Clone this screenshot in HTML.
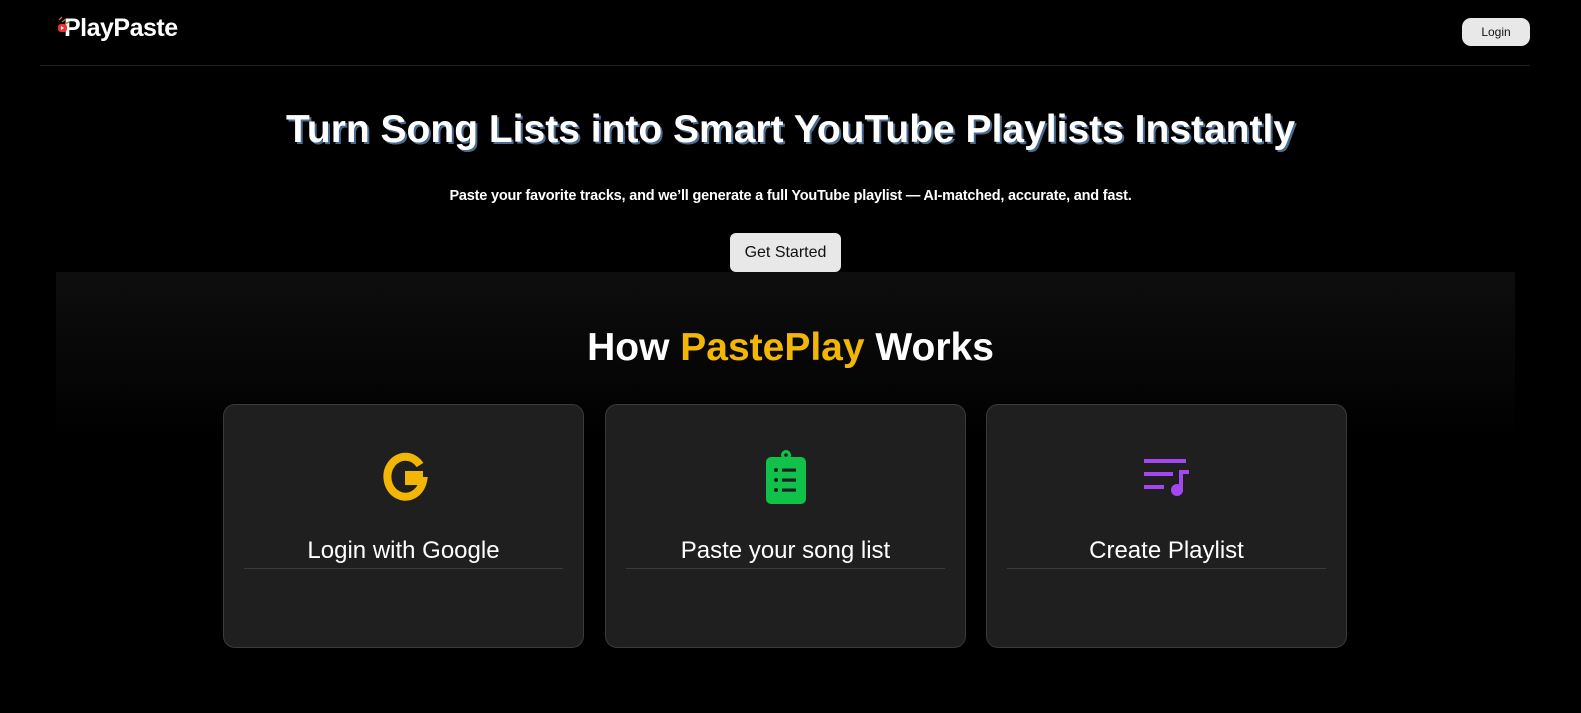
<!DOCTYPE html>
<html><head><meta charset="utf-8">
<style>
*{margin:0;padding:0;box-sizing:border-box}
body{width:1581px;height:713px;background:#000;font-family:"Liberation Sans",sans-serif;color:#fff;position:relative;overflow:hidden}
.abs{position:absolute}
.logo{left:56px;top:14px;font-size:25px;font-weight:bold;letter-spacing:-0.5px}
.hr{left:40px;top:65px;width:1490px;height:1px;background:#1f1f1f}
.login{left:1462px;top:18px;width:68px;height:28px;background:#e8e8e8;border-radius:9px;color:#111;font-size:12px;display:flex;align-items:center;justify-content:center}
h1{position:absolute;left:0;width:1581px;top:108px;text-align:center;font-size:39px;font-weight:bold;text-shadow:2px 2px 0 #4a6a90}
.sub{left:0;width:1581px;top:188px;text-align:center;font-size:14.5px;font-weight:bold;letter-spacing:-0.2px}
.btn{left:730px;top:233px;width:111px;height:39px;background:#e8e8e8;border-radius:6px;color:#111;font-size:16px;display:flex;align-items:center;justify-content:center}
.sec{left:56px;top:272px;width:1459px;height:441px;background:linear-gradient(#0e0e0e,#000 170px)}
h2{position:absolute;left:0;width:1581px;top:326px;text-align:center;font-size:39px;font-weight:bold}
.card{top:404px;width:361px;height:244px;background:#1f1f1f;border:1px solid #3a3a3a;border-radius:12px}
.card .t{position:absolute;left:0;right:0;top:132px;text-align:center;font-size:24px}
.card .l{position:absolute;left:20px;right:20px;top:163px;height:1px;background:#3a3a3a}
.card svg{position:absolute;left:50%;top:44px;transform:translateX(-50%)}
</style></head><body>
<div class="abs logo"><svg width="14" height="22" style="position:absolute;left:0;top:0" viewBox="0 0 14 22"><path d="M3 6l3-3M6 8l4-3M9 10l4-2" stroke="#c86a2a" stroke-width="1.3"/><rect x="2" y="10" width="9" height="8" rx="3" fill="#e33"/><path d="M5 12v4l3-2z" fill="#fff"/></svg><span style="margin-left:8px">PlayPaste</span></div>
<div class="abs hr"></div>
<div class="abs login">Login</div>
<h1>Turn Song Lists into Smart YouTube Playlists Instantly</h1>
<div class="abs sub">Paste your favorite tracks, and we’ll generate a full YouTube playlist — AI-matched, accurate, and fast.</div>
<div class="abs btn">Get Started</div>
<div class="abs sec"></div>
<h2>How <span style="color:#f2b705">PastePlay</span> Works</h2>
<div class="abs card" style="left:223px"><svg width="56" height="56" viewBox="0 0 56 56"><path d="M44 16A18 20 0 1 0 47 32H33v-6h14" fill="none" stroke="#f2b705" stroke-width="8"/></svg><div class="t">Login with Google</div><div class="l"></div></div>
<div class="abs card" style="left:605px"><svg width="44" height="56" viewBox="0 0 44 56"><rect x="2" y="8" width="40" height="47" rx="5" fill="#10c24a"/><circle cx="22" cy="6" r="5" fill="#10c24a"/><circle cx="22" cy="6" r="1.8" fill="#1f1f1f"/><g fill="#1f1f1f"><circle cx="12" cy="21" r="2"/><circle cx="12" cy="31" r="2"/><circle cx="12" cy="41" r="2"/><rect x="18" y="19.5" width="14" height="3.2"/><rect x="18" y="29.5" width="14" height="3.2"/><rect x="18" y="39.5" width="14" height="3.2"/></g></svg><div class="t">Paste your song list</div><div class="l"></div></div>
<div class="abs card" style="left:986px"><svg width="56" height="56" viewBox="0 0 56 56"><g fill="#a347f0"><rect x="5" y="10" width="42" height="4"/><rect x="5" y="23" width="29" height="4"/><rect x="5" y="36" width="20" height="4"/><rect x="40" y="21" width="4" height="21"/><rect x="40" y="21" width="10" height="4"/><circle cx="38" cy="41" r="6"/></g></svg><div class="t">Create Playlist</div><div class="l"></div></div>
</body></html>
